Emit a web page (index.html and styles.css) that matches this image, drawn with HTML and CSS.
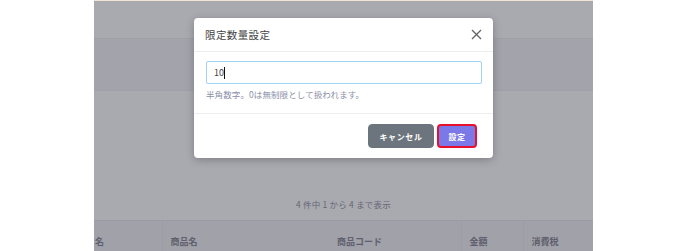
FILE: index.html
```html
<!DOCTYPE html>
<html lang="ja">
<head>
    <meta charset="UTF-8">
    <meta name="viewport" content="width=device-width, initial-scale=1.0">
    <title>限定数量設定</title>
    <link rel="stylesheet" href="styles.css">
</head>
<body>
    <div class="frame">
        <div class="list">
            <div class="row"></div>
            <div class="row row-alt"></div>
            <div class="row"></div>
        </div>

        <p class="summary">4 件中 1 から 4 まで表示</p>

        <table class="items">
            <thead>
                <tr>
                    <th class="col-name">名</th>
                    <th class="col-product">商品名</th>
                    <th class="col-code">商品コード</th>
                    <th class="col-price">金額</th>
                    <th class="col-tax">消費税</th>
                </tr>
            </thead>
        </table>

        <!-- モーダル -->
        <div class="backdrop">
            <div class="modal">
                <div class="modal-header">
                    <h2>限定数量設定</h2>
                    <button class="close-btn" aria-label="閉じる">
                        <svg width="11" height="11" viewBox="0 0 11 11">
                            <path d="M1 1 L10 10 M10 1 L1 10" stroke="#666" stroke-width="1.4" fill="none"/>
                        </svg>
                    </button>
                </div>
                <div class="modal-body">
                    <div class="input-box">10<span class="caret"></span></div>
                    <p class="help">半角数字。0は無制限として扱われます。</p>
                </div>
                <div class="modal-footer">
                    <button class="btn btn-cancel">キャンセル</button>
                    <button class="btn btn-submit">設定</button>
                </div>
            </div>
        </div>
    </div>
</body>
</html>
```

FILE: styles.css
```css
:root {
    --overlay: rgba(8, 8, 28, 0.35);
    --modal-border: #eceef2;
    --input-border: #9fd3f5;
    --help: #8a8fa8;
    --gray-btn: #6c757d;
    --purple: #7b79e8;
    --red: #e8102c;
}

* {
    margin: 0;
    padding: 0;
    box-sizing: border-box;
    font-family: 'Noto Sans CJK JP', 'Noto Sans', sans-serif;
}

body {
    background-color: #ffffff;
    width: 688px;
    height: 251px;
    overflow: hidden;
}

.frame {
    position: relative;
    margin-left: 94px;
    width: 499px;
    height: 251px;
    background-color: #ffffff;
    border-top: 1px solid #efe6d4;
    overflow: hidden;
}

.row {
    height: 53px;
}

.list .row:first-child {
    height: 37px;
}

.row-alt {
    background-color: #f6f6f7;
    border-top: 1px solid #f1f1f3;
    border-bottom: 1px solid #f1f1f3;
}

.summary {
    margin-top: 54px;
    line-height: 12px;
    text-align: center;
    font-size: 8.5px;
    color: #9c9ca6;
    letter-spacing: 0.2px;
}

.items {
    width: 100%;
    table-layout: fixed;
    border-collapse: collapse;
    margin-top: 10px;
}

.items th {
    background-color: #f3f3f5;
    border-top: 1px solid #ececef;
    height: 33px;
    padding: 8px 8px 0;
    text-align: left;
    font-size: 9px;
    font-weight: 700;
    color: #8e8e98;
    white-space: nowrap;
    overflow: hidden;
}

.items th + th {
    border-left: 1px solid #ececef;
}

.items th.col-code {
    border-left: none;
    padding-left: 4px;
}

.items .col-name { width: 68px; padding-left: 1px; }
.items .col-product { width: 171px; }
.items .col-code { width: 128px; }
.items .col-price { width: 62px; }
.items .col-tax { width: 70px; }

/* オーバーレイ */
.backdrop {
    position: absolute;
    inset: 0;
    background-color: var(--overlay);
    display: flex;
    justify-content: center;
    align-items: flex-start;
    padding-top: 17px;
}

.modal {
    width: 299px;
    background-color: #ffffff;
    border-radius: 4px;
    box-shadow: 0 2px 8px rgba(0, 0, 0, 0.25);
}

.modal-header {
    height: 34px;
    display: flex;
    align-items: center;
    justify-content: space-between;
    padding: 0 11px 0 11px;
    border-bottom: 1px solid var(--modal-border);
}

.modal-header h2 {
    font-size: 10.5px;
    font-weight: 400;
    color: #444;
    letter-spacing: 0.4px;
}

.close-btn {
    background: none;
    border: none;
    display: flex;
    cursor: pointer;
}

.modal-body {
    padding: 9px 11px 13px 12px;
    border-bottom: 1px solid var(--modal-border);
}

.input-box {
    height: 23px;
    border: 1px solid var(--input-border);
    border-radius: 2px;
    padding: 0 7px;
    display: flex;
    align-items: center;
    font-size: 9px;
    color: #444;
}

.caret {
    display: inline-block;
    width: 1px;
    height: 12px;
    background-color: #111;
}

.help {
    margin-top: 4px;
    font-size: 8.5px;
    color: var(--help);
    letter-spacing: 0.1px;
}

.modal-footer {
    display: flex;
    justify-content: flex-end;
    gap: 3px;
    padding: 10px 16px 10px 0;
}

.btn {
    height: 24px;
    border-radius: 4px;
    font-size: 8px;
    font-weight: 700;
    color: #ffffff;
    letter-spacing: 0.6px;
    cursor: pointer;
}

.btn-cancel {
    width: 66px;
    background-color: var(--gray-btn);
    border: 1px solid var(--gray-btn);
}

.btn-submit {
    width: 40px;
    background-color: var(--purple);
    border: 2px solid var(--red);
}
```
